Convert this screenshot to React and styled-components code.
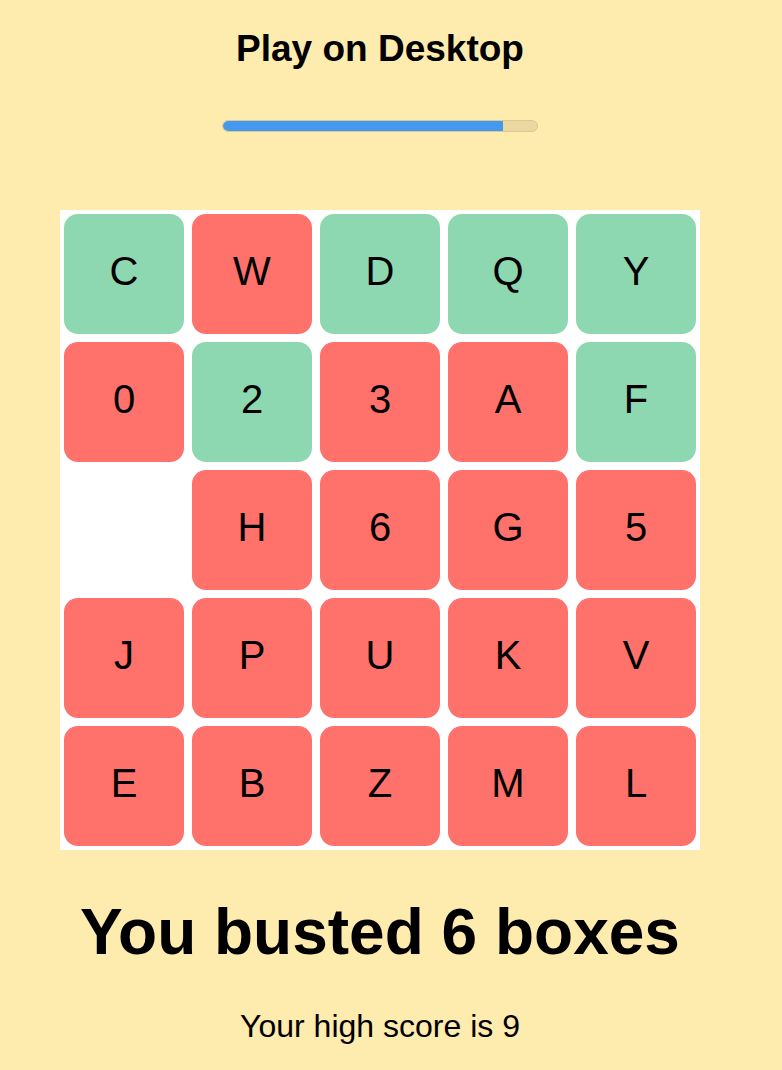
import React from "react";
import styled, { createGlobalStyle } from "styled-components";

const GlobalStyle = createGlobalStyle`
  html, body { margin: 0; padding: 0; background: #feebae; }
  body { font-family: "Liberation Sans", Arial, Helvetica, sans-serif; color: #000; }
`;

const Page = styled.div`
  width: 760px;
  display: flex;
  flex-direction: column;
  align-items: center;
  min-height: 1070px;
  background: #feebae;
`;

const Title = styled.h2`
  margin: 0;
  padding-top: 29px;
  font-size: 37px;
  line-height: 40px;
  font-weight: 700;
`;

const Track = styled.div`
  margin-top: 51px;
  width: 316px;
  height: 12px;
  box-sizing: border-box;
  border-radius: 6px;
  background: #ebd8a0;
  border: 1px solid #dcc98f;
  overflow: hidden;
`;

const Fill = styled.div`
  height: 100%;
  background: #4499ee;
  border-radius: 6px 0 0 6px;
`;

const Board = styled.div`
  margin-top: 78px;
  width: 640px;
  box-sizing: border-box;
  padding: 4px;
  background: #fff;
  display: grid;
  grid-template-columns: repeat(5, 120px);
  grid-auto-rows: 120px;
  gap: 8px;
`;

const Tile = styled.div`
  border-radius: 14px;
  background: ${(p) => (p.$state === "hit" ? "#8dd7b1" : p.$state === "miss" ? "#ff716b" : "transparent")};
  display: flex;
  align-items: center;
  justify-content: center;
  padding-bottom: 5px;
  box-sizing: border-box;
  font-size: 40px;
  font-weight: 400;
`;

const Result = styled.h1`
  margin: 50px 0 0;
  font-size: 64px;
  line-height: 64px;
  font-weight: 700;
`;

const Score = styled.p`
  margin: 46px 0 0;
  font-size: 32px;
  line-height: 32px;
`;

const G = "hit";
const R = "miss";
const tiles = [
  ["C", G], ["W", R], ["D", G], ["Q", G], ["Y", G],
  ["0", R], ["2", G], ["3", R], ["A", R], ["F", G],
  ["", "empty"], ["H", R], ["6", R], ["G", R], ["5", R],
  ["J", R], ["P", R], ["U", R], ["K", R], ["V", R],
  ["E", R], ["B", R], ["Z", R], ["M", R], ["L", R],
];

export default function App() {
  const progress = 282 / 316;
  return (
    <>
      <GlobalStyle />
      <Page>
        <Title>Play on Desktop</Title>
        <Track>
          <Fill style={{ width: `${progress * 100}%` }} />
        </Track>
        <Board>
          {tiles.map(([label, state], i) => (
            <Tile key={i} $state={state}>{label}</Tile>
          ))}
        </Board>
        <Result>You busted 6 boxes</Result>
        <Score>Your high score is 9</Score>
      </Page>
    </>
  );
}
